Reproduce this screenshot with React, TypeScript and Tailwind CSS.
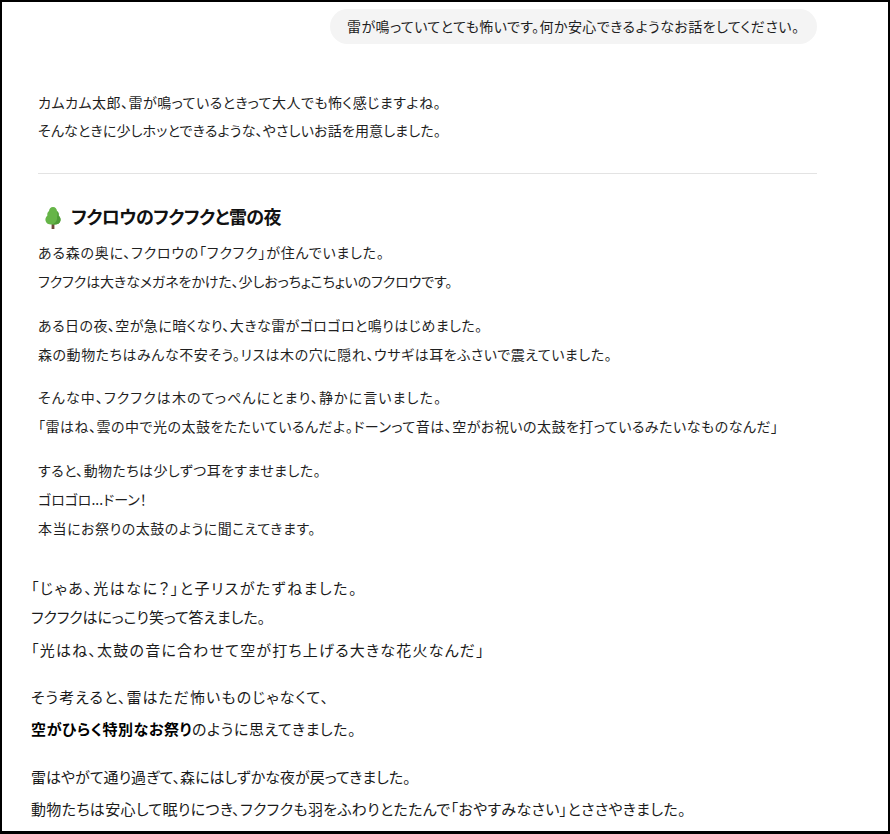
const font = { fontFamily: '"Noto Sans CJK JP", "Noto Sans", sans-serif' };

function Tree() {
    return (
        <svg width="20" height="24" viewBox="0 0 20 24" className="shrink-0 mt-[3px]">
            <rect x="8.6" y="17" width="2.8" height="6" fill="#6e4a3c" />
            <path d="M10 1 C7.5 1 6.2 3 6 5 C4.5 6 4 8 4.4 9.5 C2.8 10.8 2 13 2.6 15 C3.2 17.5 5.5 18.5 8 18.5 L12 18.5 C14.5 18.5 16.8 17.5 17.4 15 C18 13 17.2 10.8 15.6 9.5 C16 8 15.5 6 14 5 C13.8 3 12.5 1 10 1 Z" fill="#66b548" />
            <path d="M14 5 C15.5 6 16 8 15.6 9.5 C17.2 10.8 18 13 17.4 15 C16.8 17.5 14.5 18.5 12 18.5 L9 18.5 C12.5 17.5 14.5 14 14 11 C14.6 9 14.6 7 14 5 Z" fill="#4f9c38" />
        </svg>
    );
}

type Line = { text: string; cls: string };

function Para({ lines, className = '' }: { lines: Line[]; className?: string }) {
    return (
        <div className={className}>
            {lines.map((l) => (
                <div key={l.text} className={`leading-[29px] whitespace-nowrap ${l.cls}`}>{l.text}</div>
            ))}
        </div>
    );
}

export default function App() {
    return (
        <div style={font} className="w-[890px] h-[834px] overflow-hidden bg-white border-2 border-black border-b-[3px] text-[#1f1f1f] [font-feature-settings:'palt'] box-border">
            <div className="pl-[36px] pr-[71px] text-[14px]">
                <div className="flex justify-end pt-[7px]">
                    <div className="h-[35px] w-[487px] rounded-[18px] bg-[#f4f4f4] pl-[17px] flex items-center whitespace-nowrap tracking-[0.43px]">
                        雷が鳴っていてとても怖いです。何か安心できるようなお話をしてください。
                    </div>
                </div>

                <div className="mt-[44px]">
                    <div className="leading-[28px] whitespace-nowrap tracking-[0.48px]">カムカム太郎、雷が鳴っているときって大人でも怖く感じますよね。</div>
                    <div className="leading-[28px] whitespace-nowrap tracking-[0.16px]">そんなときに少しホッとできるような、やさしいお話を用意しました。</div>
                </div>

                <hr className="mt-[29px] border-[#e3e3e3]" />

                <div className="mt-[26px] flex items-center gap-[8px] pl-[5px] h-[32px]">
                    <Tree />
                    <h3 className="text-[18px] font-bold text-[#111] whitespace-nowrap tracking-[-0.6px]">フクロウのフクフクと雷の夜</h3>
                </div>

                <Para className="mt-[6px]" lines={[
                    { text: 'ある森の奥に、フクロウの「フクフク」が住んでいました。', cls: 'tracking-[0.78px]' },
                    { text: 'フクフクは大きなメガネをかけた、少しおっちょこちょいのフクロウです。', cls: 'tracking-[-0.09px]' },
                ]} />
                <Para className="mt-[15px]" lines={[
                    { text: 'ある日の夜、空が急に暗くなり、大きな雷がゴロゴロと鳴りはじめました。', cls: 'tracking-[0.44px]' },
                    { text: '森の動物たちはみんな不安そう。リスは木の穴に隠れ、ウサギは耳をふさいで震えていました。', cls: 'tracking-[0.55px]' },
                ]} />
                <Para className="mt-[14px]" lines={[
                    { text: 'そんな中、フクフクは木のてっぺんにとまり、静かに言いました。', cls: 'tracking-[1.1px]' },
                    { text: '「雷はね、雲の中で光の太鼓をたたいているんだよ。ドーンって音は、空がお祝いの太鼓を打っているみたいなものなんだ」', cls: 'tracking-[0.49px]' },
                ]} />
                <Para className="mt-[15px]" lines={[
                    { text: 'すると、動物たちは少しずつ耳をすませました。', cls: 'tracking-[0.41px]' },
                    { text: 'ゴロゴロ...ドーン！', cls: 'tracking-[0px]' },
                    { text: '本当にお祭りの太鼓のように聞こえてきます。', cls: 'tracking-[0.52px]' },
                ]} />
            </div>

            <div className="pl-[29px] text-[15px] text-[#1a1a1a]">
                <div className="mt-[30px]">
                    <div className="leading-[29px] tracking-[1.5px]">「じゃあ、光はなに？」と子リスがたずねました。</div>
                    <div className="leading-[29px] tracking-[-0.1px]">フクフクはにっこり笑って答えました。</div>
                    <div className="leading-[37px] tracking-[1.2px]">「光はね、太鼓の音に合わせて空が打ち上げる大きな花火なんだ」</div>
                </div>
                <div className="mt-[13px]">
                    <div className="leading-[32px] tracking-[1.1px]">そう考えると、雷はただ怖いものじゃなくて、</div>
                    <div className="leading-[32px] tracking-[0.6px]"><strong className="font-bold text-black">空がひらく特別なお祭り</strong>のように思えてきました。</div>
                </div>
                <div className="mt-[16px]">
                    <div className="leading-[32px]">雷はやがて通り過ぎて、森にはしずかな夜が戻ってきました。</div>
                    <div className="leading-[32px] tracking-[0.33px]">動物たちは安心して眠りにつき、フクフクも羽をふわりとたたんで「おやすみなさい」とささやきました。</div>
                </div>
            </div>
        </div>
    );
}
